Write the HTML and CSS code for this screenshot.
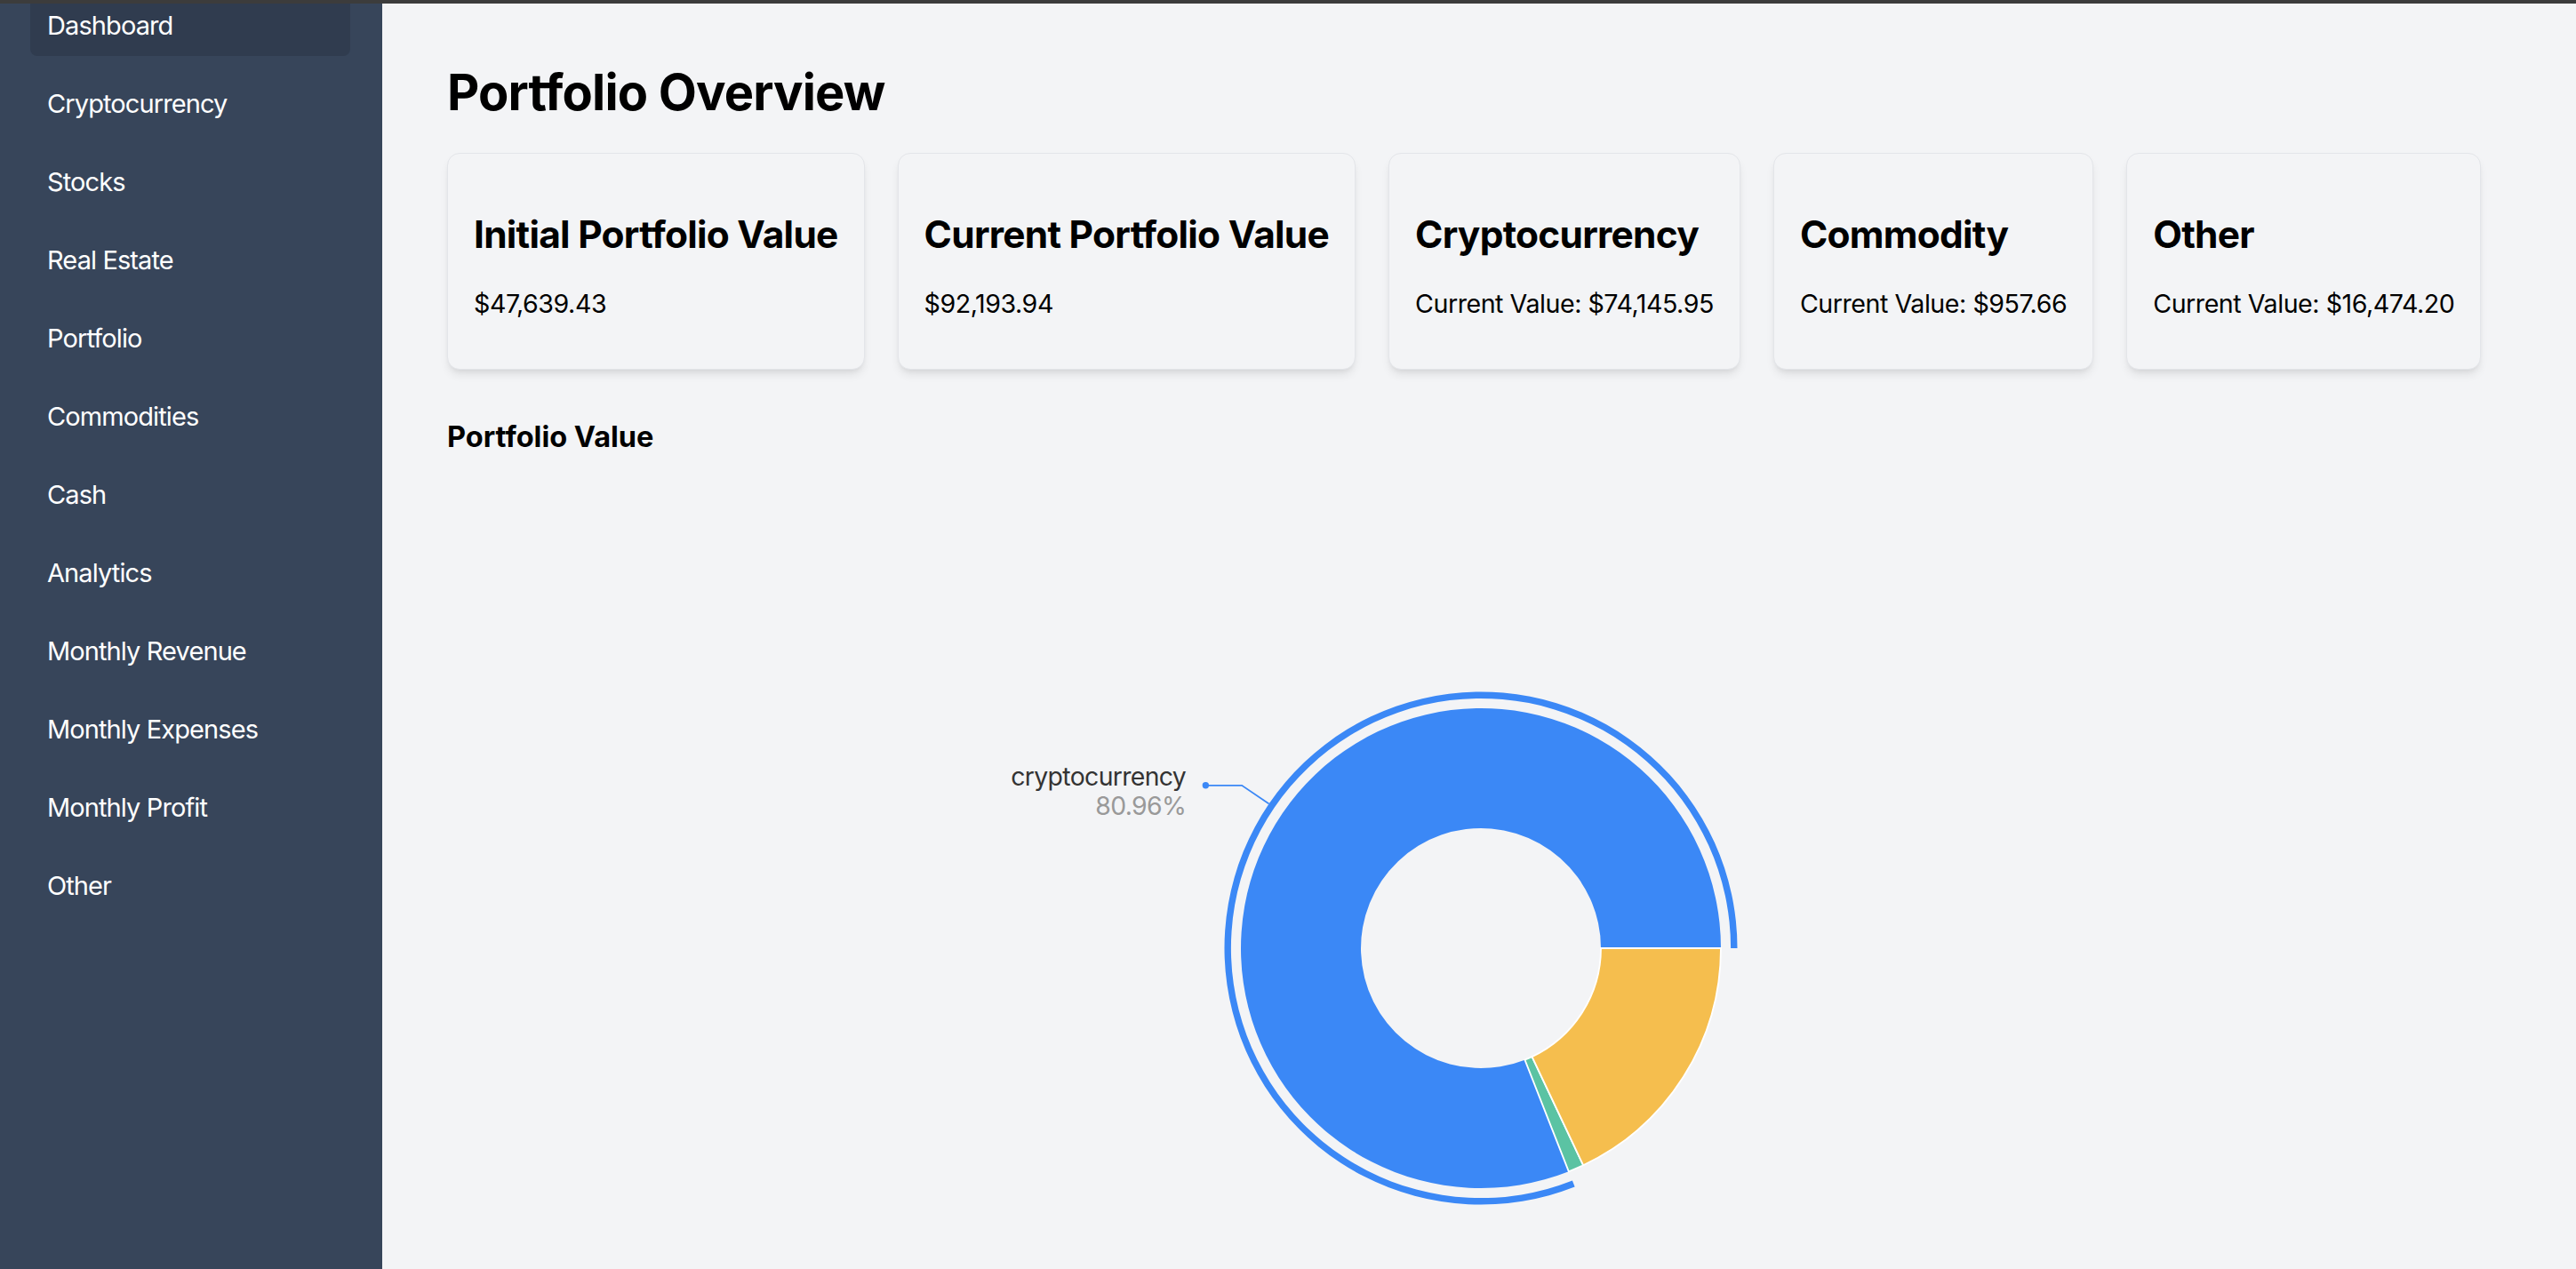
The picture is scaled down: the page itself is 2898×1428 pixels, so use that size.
FILE: index.html
```html
<!DOCTYPE html>
<html lang="en">
<head>
<meta charset="utf-8">
<title>Portfolio Overview</title>
<link rel="stylesheet" href="styles.css">
</head>
<body>
<div class="topbar"></div>
<div class="app">
  <aside class="sidebar">
    <nav class="nav">
      <a class="nav-item active">Dashboard</a>
      <a class="nav-item">Cryptocurrency</a>
      <a class="nav-item">Stocks</a>
      <a class="nav-item">Real Estate</a>
      <a class="nav-item">Portfolio</a>
      <a class="nav-item">Commodities</a>
      <a class="nav-item">Cash</a>
      <a class="nav-item">Analytics</a>
      <a class="nav-item">Monthly Revenue</a>
      <a class="nav-item">Monthly Expenses</a>
      <a class="nav-item">Monthly Profit</a>
      <a class="nav-item">Other</a>
    </nav>
  </aside>
  <main class="main">
    <h1 class="page-title">Portfolio Overview</h1>
    <div class="cards">
      <div class="card">
        <h2 class="card-title">Initial Portfolio Value</h2>
        <p class="card-value">$47,639.43</p>
      </div>
      <div class="card">
        <h2 class="card-title">Current Portfolio Value</h2>
        <p class="card-value">$92,193.94</p>
      </div>
      <div class="card">
        <h2 class="card-title">Cryptocurrency</h2>
        <p class="card-value">Current Value: $74,145.95</p>
      </div>
      <div class="card">
        <h2 class="card-title">Commodity</h2>
        <p class="card-value">Current Value: $957.66</p>
      </div>
      <div class="card">
        <h2 class="card-title">Other</h2>
        <p class="card-value">Current Value: $16,474.20</p>
      </div>
    </div>
    <h3 class="section-title">Portfolio Value</h3>
    <svg class="chart" viewBox="0 0 2322 880" preserveAspectRatio="xMidYMin meet">
      <path class="slice-crypto" d="M1433,553 A270,270 0 1 0 1261.84,804.26 L1212.42,678.63 A135,135 0 1 1 1298,553 Z"/>
      <path class="slice-commodity" d="M1261.84,804.26 A270,270 0 0 0 1278.13,797.23 L1220.56,675.11 A135,135 0 0 1 1212.42,678.63 Z"/>
      <path class="slice-other" d="M1278.13,797.23 A270,270 0 0 0 1433,553 L1298,553 A135,135 0 0 1 1220.56,675.11 Z"/>
      <path class="slice-ring" d="M1451.5,553 A288.5,288.5 0 1 0 1268.61,821.47 L1265.91,814.59 A281.1,281.1 0 1 1 1444.1,553 Z"/>
      <path class="label-line" d="M924.56,390.57 L894.07,369.8 L853.37,369.8"/>
      <circle class="label-dot" cx="853.37" cy="369.8" r="3.7"/>
      <text class="label-name" x="831.2" y="369.8">cryptocurrency</text>
      <text class="label-pct" x="831.2" y="403.1">80.96%</text>
    </svg>
  </main>
</div>
</body>
</html>
```
FILE: styles.css
```css
* {
  box-sizing: border-box;
}

html,
body {
  margin: 0;
  height: 100%;
  overflow: hidden;
}

body {
  font-family: Inter, "Noto Sans", "Liberation Sans", sans-serif;
  background: #f3f4f6;
  color: #000;
  display: flex;
  flex-direction: column;
}

.topbar {
  height: 4px;
  flex: none;
  background: #3c3c3c;
}

.app {
  flex: 1;
  display: flex;
  min-height: 0;
}

.sidebar {
  width: 430px;
  flex: none;
  background: #37455a;
  overflow: hidden;
}

.nav {
  display: flex;
  flex-direction: column;
  gap: 20px;
  padding: 0 36px 0 34px;
  margin-top: -9.3px;
}

.nav-item {
  display: block;
  height: 68px;
  padding: 14px 19px;
  font-size: 29px;
  line-height: 40px;
  letter-spacing: -0.9px;
  color: #fff;
  text-decoration: none;
  border-radius: 8px;
  white-space: nowrap;
}

.nav-item.active {
  background: #303c4f;
}

.main {
  flex: 1;
  min-width: 0;
  padding: 65.6px 73px 0 73px;
  overflow: hidden;
}

.page-title {
  margin: 0 0 34.7px;
  font-size: 56px;
  line-height: 68px;
  font-weight: 700;
  letter-spacing: -0.85px;
}

.cards {
  display: flex;
  gap: 37px;
  align-items: flex-start;
}

.card {
  height: 244px;
  padding: 29px;
  border: 1px solid #e3e5e9;
  border-radius: 14px;
  background: #f3f4f6;
  box-shadow: 0 7px 11px -2px rgba(0, 0, 0, 0.09), 0 4px 7px -4px rgba(0, 0, 0, 0.09);
}

.card-title {
  margin: 31.8px 0 26.8px;
  font-size: 42.4px;
  line-height: 59px;
  font-weight: 700;
  letter-spacing: -0.72px;
  white-space: nowrap;
}

.card-value {
  margin: 0;
  font-size: 28.6px;
  line-height: 44px;
  letter-spacing: -0.46px;
  white-space: nowrap;
}

.section-title {
  margin: 53.5px 0 0;
  font-size: 32.5px;
  line-height: 44px;
  font-weight: 700;
}

.chart {
  display: block;
  width: 100%;
  height: 880px;
}

.slice-crypto {
  fill: #3b88f6;
}

.slice-commodity {
  fill: #5bc3a3;
  stroke: #fff;
  stroke-width: 1.85;
}

.slice-other {
  fill: #f5be4e;
  stroke: #fff;
  stroke-width: 1.85;
}

.slice-ring {
  fill: #3b88f6;
}

.label-line {
  fill: none;
  stroke: #3b88f6;
  stroke-width: 1.85;
}

.label-dot {
  fill: #3b88f6;
}

.label-name,
.label-pct {
  font-family: Inter, "Noto Sans", sans-serif;
  font-size: 28.4px;
  letter-spacing: -0.65px;
  text-anchor: end;
}

.label-name {
  fill: #333;
}

.label-pct {
  fill: #999;
}
```
